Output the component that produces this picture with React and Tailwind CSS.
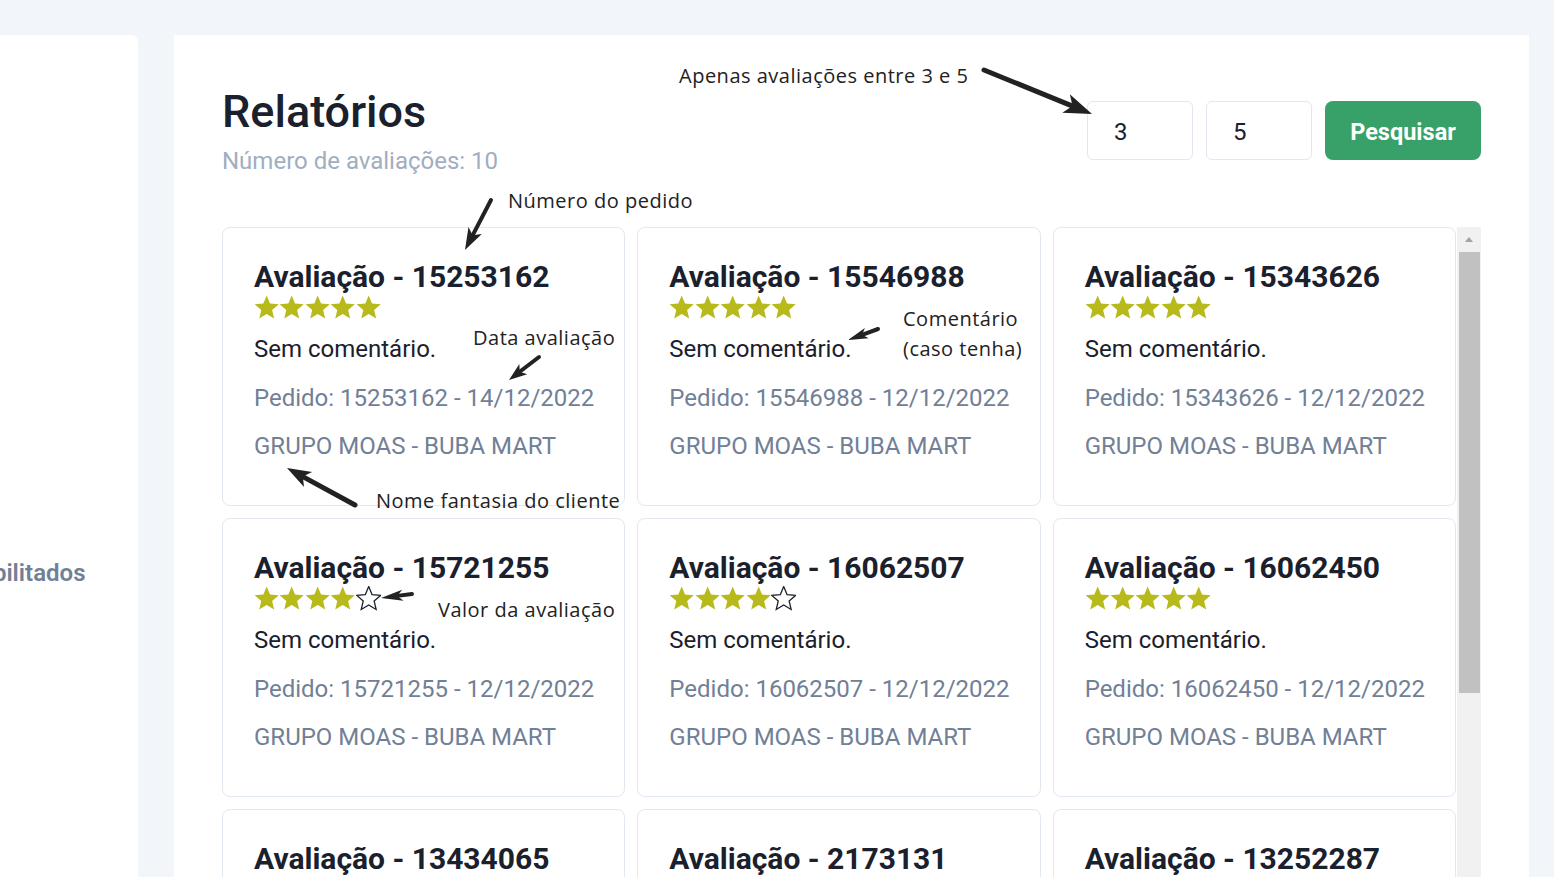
const reviews = [
  { id: "15253162", stars: 5, date: "14/12/2022" },
  { id: "15546988", stars: 5, date: "12/12/2022" },
  { id: "15343626", stars: 5, date: "12/12/2022" },
  { id: "15721255", stars: 4, date: "12/12/2022" },
  { id: "16062507", stars: 4, date: "12/12/2022" },
  { id: "16062450", stars: 5, date: "12/12/2022" },
  { id: "13434065", stars: 5, date: "12/12/2022" },
  { id: "2173131", stars: 5, date: "12/12/2022" },
  { id: "13252287", stars: 5, date: "12/12/2022" },
];

const STAR =
  "50,2 63.2,33.8 97.6,36.5 71.4,59 79.4,92.5 50,74.5 20.6,92.5 28.6,59 2.4,36.5 36.8,33.8";

function Star({ filled }) {
  return (
    <svg width="25.4" height="25.4" viewBox="0 0 100 100">
      {filled ? (
        <polygon points={STAR} fill="#b8ba1c" />
      ) : (
        <polygon points={STAR} fill="none" stroke="#1a202c" strokeWidth="5" strokeLinejoin="miter" />
      )}
    </svg>
  );
}

function Arrow({ x1, y1, x2, y2, head = 24, wide = 16, stroke = 4 }) {
  const dx = x2 - x1;
  const dy = y2 - y1;
  const len = Math.hypot(dx, dy);
  const ux = dx / len;
  const uy = dy / len;
  const bx = x2 - ux * head;
  const by = y2 - uy * head;
  const px = (-uy * wide) / 2;
  const py = (ux * wide) / 2;
  const nx = bx + ux * head * 0.25;
  const ny = by + uy * head * 0.25;
  return (
    <g fill="#222" stroke="#222">
      <line x1={x1} y1={y1} x2={nx} y2={ny} strokeWidth={stroke} strokeLinecap="round" />
      <polygon
        points={`${x2},${y2} ${bx + px},${by + py} ${nx},${ny} ${bx - px},${by - py}`}
        strokeWidth="0"
      />
    </g>
  );
}

function Card({ r }) {
  return (
    <div className="h-[279px] rounded-lg border border-[#e2e8f0] bg-white pl-[31px] pt-[31px]">
      <h2 className="text-[30px] font-bold leading-[36px] text-[#1a202c]">
        Avaliação - {r.id}
      </h2>
      <div className="mt-[1px] flex h-[24px] items-center">
        {[1, 2, 3, 4, 5].map((n) => (
          <Star key={n} filled={n <= r.stars} />
        ))}
      </div>
      <p className="mt-[11px] text-[24px] leading-[36px] text-[#1a202c]">Sem comentário.</p>
      <p className="mt-[13px] text-[24px] leading-[36px] text-[#718096]">
        Pedido: {r.id} - {r.date}
      </p>
      <p className="mt-[12px] text-[24px] leading-[36px] text-[#718096]">GRUPO MOAS - BUBA MART</p>
    </div>
  );
}

export default function App() {
  return (
    <div
      className="relative flex h-[877px] gap-[36px] overflow-hidden bg-[#f2f5f9] pt-[35px]"
      style={{ fontFamily: "Roboto, 'Liberation Sans', sans-serif" }}
    >
      {/* SIDEBAR */}
      <aside className="w-[138px] shrink-0 overflow-hidden rounded-tr-md bg-white pt-[520px]">
        <span className="-ml-[37px] block whitespace-nowrap text-[24px] font-semibold leading-[36px] text-[#718096]">
          Habilitados
        </span>
      </aside>

      {/* MAIN */}
      <main className="w-[1355px] shrink-0 bg-white px-[48px] pt-[50px]">
        <div className="flex items-start justify-between">
          <div>
            <h1 className="text-[45px] font-medium leading-[54px] text-[#1a202c]">Relatórios</h1>
            <p className="mt-[4px] text-[24px] leading-[36px] text-[#a0aec0]">
              Número de avaliações: 10
            </p>
          </div>
          <div className="mt-[16px] flex gap-[13px]">
            <input
              defaultValue="3"
              className="h-[59px] w-[106px] rounded-md border border-[#e2e8f0] pl-[26px] pt-[2px] text-[24px] text-[#1a202c] outline-none"
            />
            <input
              defaultValue="5"
              className="h-[59px] w-[106px] rounded-md border border-[#e2e8f0] pl-[26px] pt-[2px] text-[24px] text-[#1a202c] outline-none"
            />
            <button className="h-[59px] w-[156px] rounded-lg bg-[#38a169] pt-[4px] text-[23.5px] font-bold text-white">
              Pesquisar
            </button>
          </div>
        </div>

        {/* LISTA */}
        <div className="mt-[48px] flex h-[650px] overflow-hidden">
          <div className="grid w-[1234px] shrink-0 grid-cols-3 content-start gap-[12px]">
            {reviews.map((r) => (
              <Card key={r.id} r={r} />
            ))}
          </div>
          <div className="ml-[1px] flex w-[24px] flex-col items-center bg-[#f1f1f1]">
            <div className="mt-[10px] h-0 w-0 border-x-[4px] border-b-[5px] border-x-transparent border-b-[#a3a3a3]" />
            <div className="mt-[10px] h-[441px] w-[21px] bg-[#c1c1c1]" />
          </div>
        </div>
      </main>

      {/* ANOTAÇÕES */}
      <div
        className="pointer-events-none absolute inset-0 text-[20px] leading-[30px] tracking-[0.5px] text-[#222]"
        style={{ fontFamily: "'Open Sans', 'Noto Sans', sans-serif" }}
      >
        <span className="absolute left-[679px] top-[61px] whitespace-nowrap">Apenas avaliações entre 3 e 5</span>
        <span className="absolute left-[508px] top-[186px] whitespace-nowrap">Número do pedido</span>
        <span className="absolute left-[473px] top-[323px] whitespace-nowrap">Data avaliação</span>
        <span className="absolute left-[903px] top-[304px] whitespace-nowrap">
          Comentário
          <br />
          (caso tenha)
        </span>
        <span className="absolute left-[376px] top-[486px] whitespace-nowrap">Nome fantasia do cliente</span>
        <span className="absolute left-[438px] top-[595px] whitespace-nowrap">Valor da avaliação</span>
        <svg className="absolute inset-0" width="1554" height="877">
          <Arrow x1={984} y1={70} x2={1092} y2={114} head={28} wide={20} stroke={5} />
          <Arrow x1={491} y1={200} x2={465} y2={250} head={22} wide={15} />
          <Arrow x1={539} y1={357} x2={509} y2={380} head={18} wide={13} />
          <Arrow x1={878} y1={329} x2={848} y2={340} head={20} wide={11} />
          <Arrow x1={355} y1={505} x2={287} y2={468} head={24} wide={17} stroke={5} />
          <Arrow x1={412} y1={594} x2={381} y2={598} head={22} wide={11} />
        </svg>
      </div>
    </div>
  );
}
